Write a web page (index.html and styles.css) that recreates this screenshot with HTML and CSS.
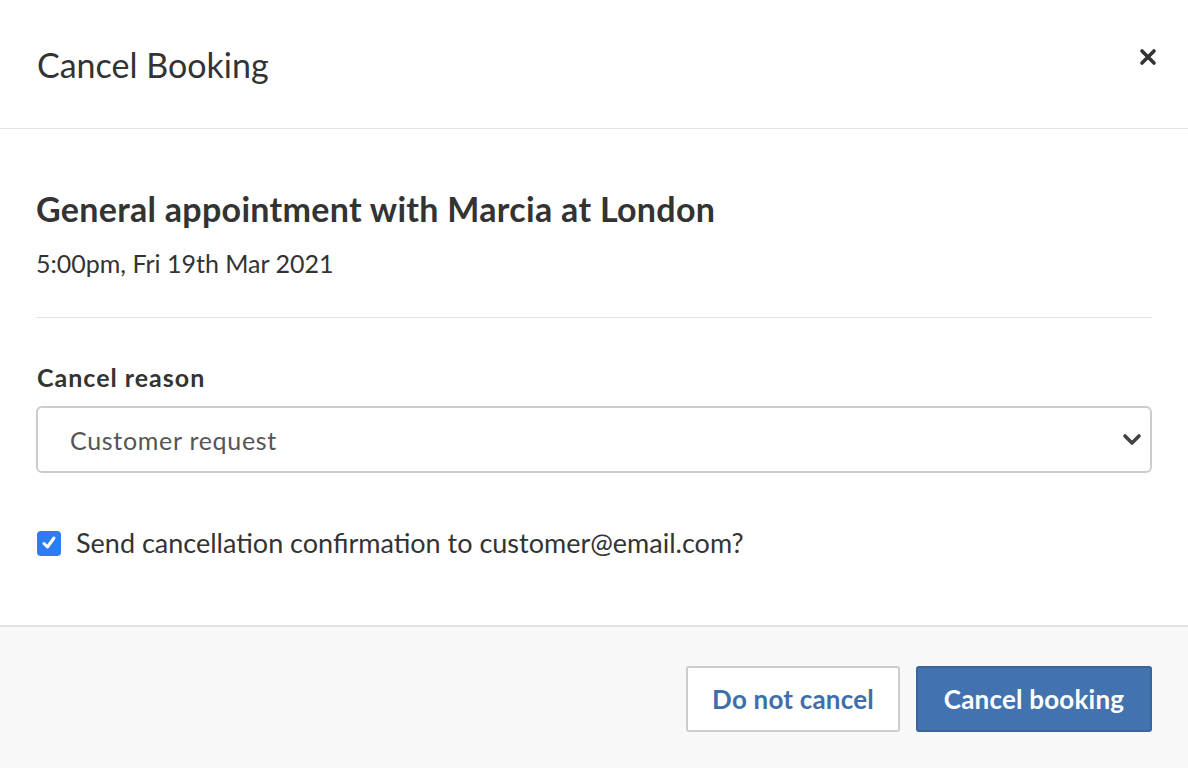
FILE: index.html
```html
<!DOCTYPE html>
<html>
<head>
<meta charset="utf-8">
<link rel="stylesheet" href="styles.css">
</head>
<body>
<div class="modal">
  <header class="modal-header">
    <h1 class="modal-title">Cancel Booking</h1>
    <button class="close" aria-label="Close">
      <svg width="18" height="18" viewBox="0 0 18 18"><path d="M3 3 L15 15 M15 3 L3 15" stroke="#333" stroke-width="3.6" stroke-linecap="round"/></svg>
    </button>
  </header>
  <main class="modal-body">
    <section class="booking">
      <h2 class="booking-title">General appointment with Marcia at London</h2>
      <p class="booking-date">5:00pm, Fri 19th Mar 2021</p>
    </section>
    <section class="form">
      <label class="field-label">Cancel reason</label>
      <div class="select">
        <span class="select-value">Customer request</span>
        <svg class="chevron" width="20" height="14" viewBox="0 0 20 14"><path d="M3 3 L10 10 L17 3" fill="none" stroke="#444" stroke-width="3.6" stroke-linecap="round" stroke-linejoin="round"/></svg>
      </div>
      <div class="check-row">
        <span class="checkbox"><svg width="18" height="18" viewBox="0 0 18 18"><path d="M4 9.5 L7.5 13 L14 4" fill="none" stroke="#fff" stroke-width="3" stroke-linecap="round" stroke-linejoin="round"/></svg></span>
        <span class="check-label">Send cancellation confirmation to customer@email.com?</span>
      </div>
    </section>
  </main>
  <footer class="modal-footer">
    <button class="btn btn-default">Do not cancel</button>
    <button class="btn btn-primary">Cancel booking</button>
  </footer>
</div>
</body>
</html>
```
FILE: styles.css
```css
* { box-sizing: border-box; }
html, body { margin: 0; padding: 0; }
body {
  font-family: Lato, "Open Sans", sans-serif;
  color: #333;
  background: #fff;
  width: 1188px;
  height: 768px;
  overflow: hidden;
}
.modal { display: flex; flex-direction: column; height: 768px; }
.modal-header {
  height: 129px;
  border-bottom: 1px solid #e3e3e3;
  display: flex;
  align-items: center;
  justify-content: space-between;
  padding: 0 36px 0 37px;
}
.modal-title { margin: 0; font-size: 34px; font-weight: 400; color: #333; }
.close {
  border: 0; background: none; padding: 0; margin-top: -14px; margin-right: -5px;
  width: 18px; height: 18px; display: flex;
}
.modal-body { padding: 0 36px; flex: 1; }
.booking { padding-top: 60px; padding-bottom: 39px; border-bottom: 1px solid #e3e3e3; }
.booking-title { margin: 0; font-size: 34px; font-weight: 700; line-height: 40px; letter-spacing: 0.3px; }
.booking-date { margin: 19px 0 0; font-size: 25px; line-height: 30px; }
.form { padding-top: 44px; }
.field-label { display: block; font-size: 25px; font-weight: 700; line-height: 30px; margin-left: 1px; letter-spacing: 1px; }
.select {
  margin-top: 14px;
  height: 67px;
  border: 2px solid #ccc;
  border-radius: 6px;
  display: flex;
  align-items: center;
  justify-content: space-between;
  padding: 0 8px 0 32px;
}
.select-value { font-size: 25px; color: #555; letter-spacing: 0.7px; }
.check-row { display: flex; align-items: center; margin-top: 54px; gap: 15px; padding-left: 1px; }
.checkbox {
  width: 24px; height: 25px; border-radius: 4px; background: #2d7cf6;
  display: flex; align-items: center; justify-content: center;
}
.check-label { font-size: 27px; line-height: 32px; }
.modal-footer {
  height: 143px;
  border-top: 2px solid #e3e3e3;
  background: #f8f8f8;
  display: flex;
  justify-content: flex-end;
  align-items: center;
  gap: 16px;
  padding: 3px 36px 0 0;
}
.btn {
  height: 66px;
  font-family: inherit;
  font-size: 26px;
  font-weight: 700;
  border-radius: 3px;
  padding: 0;
  white-space: nowrap;
  letter-spacing: 0.2px;
}
.btn-default { background: #fff; border: 2px solid #ccc; color: #3f6fab; width: 214px; }
.btn-primary { background: #4273af; border: 2px solid #38659e; color: #fff; width: 236px; }
```
